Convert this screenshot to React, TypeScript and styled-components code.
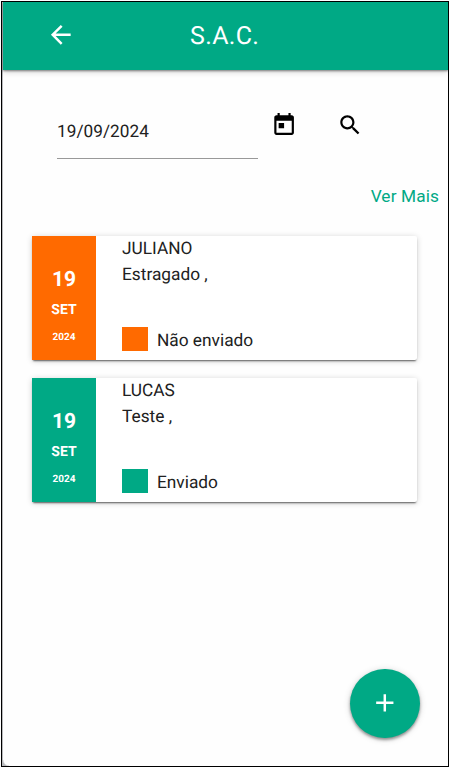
import React from 'react';
import styled, { createGlobalStyle } from 'styled-components';

const GREEN = '#00a985';
const ORANGE = '#ff6a00';

const GlobalStyle = createGlobalStyle`
  * { box-sizing: border-box; }
  body { margin: 0; background: #fff; font-family: Roboto, sans-serif; color: #212121; overflow: hidden; text-rendering: geometricPrecision; }
  button { border: 0; padding: 0; background: none; font: inherit; color: inherit; display: block; }
`;

const Screen = styled.div`
  position: relative;
  width: 448px;
  height: 766px;
  margin: 1px 0 0 1px;
  border: 1px solid #000;
  background: radial-gradient(circle at 100% 0, #fefefe 5px, #b9babd 6.5px) 1px 100% / 6px 6px no-repeat, #fefefe;
  box-shadow: inset 1px 0 0 #b9babd;
  overflow: hidden;
`;

const Header = styled.header`
  display: flex;
  align-items: center;
  height: 68px;
  margin-left: 1px;
  padding: 0 0 2px 43px;
  background: ${GREEN};
  color: #fff;
  box-shadow: 0 1px 2px rgba(0, 0, 0, 0.45), 0 2px 6px rgba(0, 0, 0, 0.18);
`;

const Title = styled.h1`
  margin: 3px 0 0 114.5px;
  font-size: 25px;
  font-weight: 400;
  line-height: 30px;
  letter-spacing: 0.3px;
`;

const Icon = styled.svg<{ $size: number }>`
  display: block;
  width: ${(p) => p.$size}px;
  height: ${(p) => p.$size}px;
  fill: currentColor;
`;

const SearchRow = styled.div`
  display: flex;
  align-items: flex-start;
  margin-top: 42px;
  padding-left: 55px;
  color: #000;
`;

const DateField = styled.input`
  width: 201px;
  height: 47px;
  margin-right: 12.5px;
  padding: 0 0 7px;
  border: 0;
  border-bottom: 1px solid #999;
  outline: 0;
  background: transparent;
  color: #212121;
  font: 400 17.2px Roboto, sans-serif;
  letter-spacing: 0.05px;
  text-rendering: geometricPrecision;
`;

const IconButton = styled.button`
  margin-right: 40px;
`;

const MoreButton = styled.button`
  && {
    margin: 24px 9px 0 auto;
    color: ${GREEN};
    font-size: 17.3px;
    line-height: 26px;
    letter-spacing: 0.1px;
  }
`;

const List = styled.main`
  display: grid;
  gap: 18px;
  width: 385px;
  margin: 27px 0 0 30px;
`;

const Card = styled.article`
  display: flex;
  height: 124px;
  border-radius: 2px;
  background: #fff;
  box-shadow: 0 2px 2px -1px rgba(0, 0, 0, 0.6), 0 1px 6px rgba(0, 0, 0, 0.18);
`;

const DateBlock = styled.time<{ $color: string }>`
  display: flex;
  flex-direction: column;
  align-items: center;
  width: 64px;
  padding-top: 29px;
  background: ${(p) => p.$color};
  color: #fff;
  font-weight: 700;
`;

const Day = styled.span`
  font-size: 21px;
  line-height: 30px;
`;

const Month = styled.span`
  font-size: 14px;
  line-height: 30px;
`;

const Year = styled.span`
  font-size: 10px;
  line-height: 26px;
`;

const Details = styled.div`
  padding-left: 26px;
  font-size: 17.3px;
  line-height: 26px;
`;

const Status = styled.div`
  display: flex;
  align-items: flex-start;
  margin-top: 40px;
`;

const Swatch = styled.span<{ $color: string }>`
  width: 26px;
  height: 24px;
  margin: -1px 9px 0 0;
  background: ${(p) => p.$color};
`;

const AddButton = styled.button`
  && {
    position: absolute;
    right: 28.5px;
    bottom: 28px;
    display: grid;
    place-items: center;
    width: 69.5px;
    height: 69.5px;
    border-radius: 50%;
    background: ${GREEN};
    color: #fff;
    box-shadow: 0 2px 3px rgba(0, 0, 0, 0.38), 0 1px 7px rgba(0, 0, 0, 0.16);
  }
`;

const records = [
  { name: 'JULIANO', text: 'Estragado ,', status: 'Não enviado', color: ORANGE },
  { name: 'LUCAS', text: 'Teste ,', status: 'Enviado', color: GREEN },
];

function Glyph({ d, size }: { d: string; size: number }) {
  return (
    <Icon $size={size} viewBox="0 0 24 24" aria-hidden="true">
      <path d={d} />
    </Icon>
  );
}

export default function App() {
  return (
    <>
      <GlobalStyle />
      <Screen>
        <Header>
          <button aria-label="Voltar">
            <Glyph size={29.6} d="M20 11H7.83l5.59-5.59L12 4l-8 8 8 8 1.41-1.41L7.83 13H20v-2z" />
          </button>
          <Title>S.A.C.</Title>
        </Header>
        <SearchRow>
          <DateField aria-label="Data" defaultValue="19/09/2024" />
          <IconButton aria-label="Calendário">
            <Glyph
              size={26.2}
              d="M19 3h-1V1h-2v2H8V1H6v2H5c-1.11 0-1.99.9-1.99 2L3 19c0 1.1.89 2 2 2h14c1.1 0 2-.9 2-2V5c0-1.1-.9-2-2-2zm0 16H5V8h14v11zM7 10h5v5H7z"
            />
          </IconButton>
          <IconButton aria-label="Pesquisar">
            <Glyph
              size={26.2}
              d="M15.5 14h-.79l-.28-.27C15.41 12.59 16 11.11 16 9.5 16 5.91 13.09 3 9.5 3S3 5.91 3 9.5 5.91 16 9.5 16c1.61 0 3.09-.59 4.23-1.57l.27.28v.79l5 4.99L20.49 19l-4.99-5zm-6 0C7.01 14 5 11.99 5 9.5S7.01 5 9.5 5 14 7.01 14 9.5 11.99 14 9.5 14z"
            />
          </IconButton>
        </SearchRow>
        <MoreButton>Ver Mais</MoreButton>
        <List>
          {records.map((r) => (
            <Card key={r.name}>
              <DateBlock $color={r.color} dateTime="2024-09-19">
                <Day>19</Day>
                <Month>SET</Month>
                <Year>2024</Year>
              </DateBlock>
              <Details>
                <div>{r.name}</div>
                <div>{r.text}</div>
                <Status>
                  <Swatch $color={r.color} />
                  {r.status}
                </Status>
              </Details>
            </Card>
          ))}
        </List>
        <AddButton aria-label="Adicionar">
          <Glyph size={29.6} d="M19 13h-6v6h-2v-6H5v-2h6V5h2v6h6v2z" />
        </AddButton>
      </Screen>
    </>
  );
}
